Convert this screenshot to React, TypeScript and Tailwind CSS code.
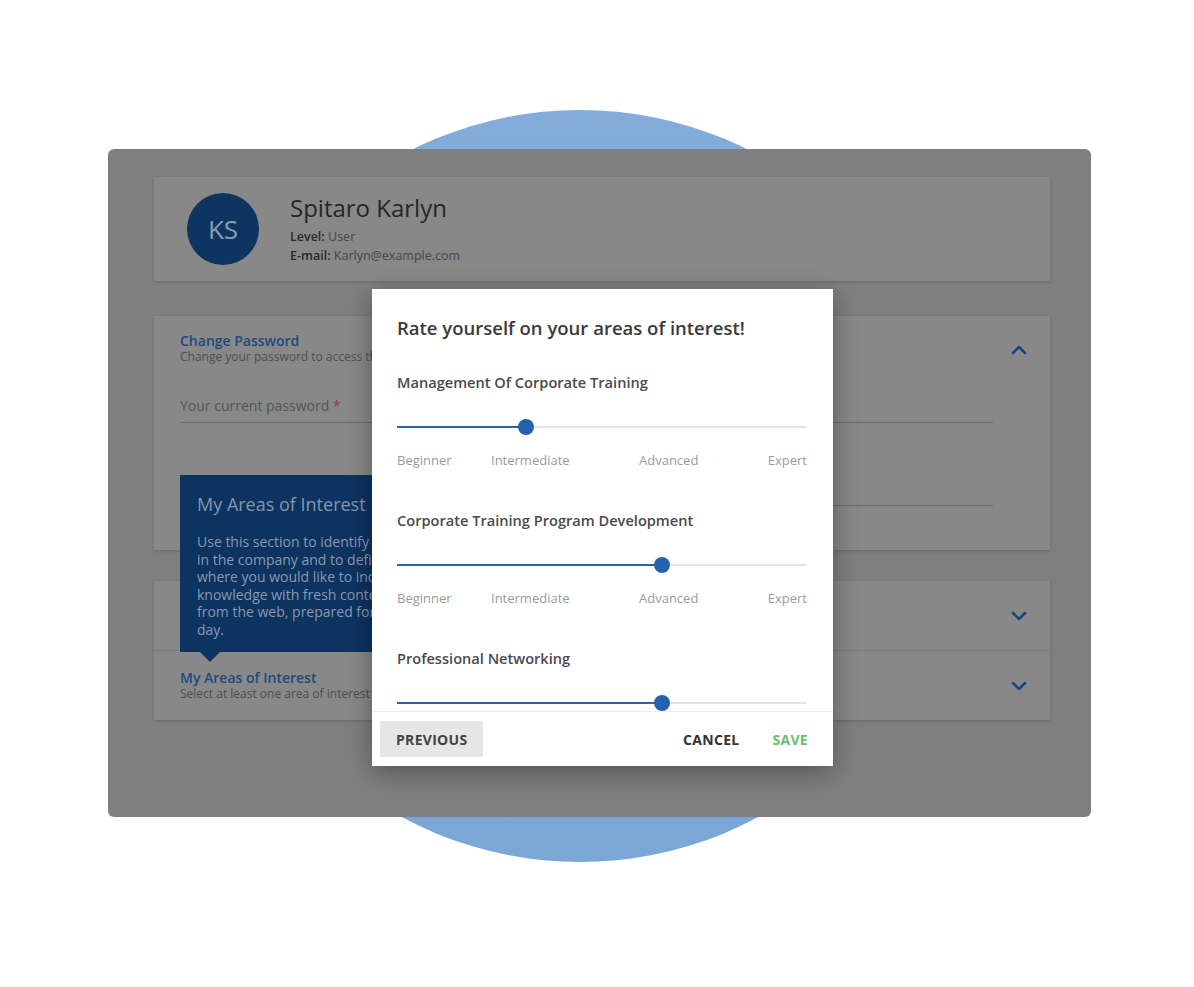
import React from 'react';
import { ChevronDown, ChevronUp } from 'lucide-react';

type Area = { name: string; value: number };

const areas: Area[] = [
  { name: 'Management Of Corporate Training', value: 129 },
  { name: 'Corporate Training Program Development', value: 265 },
  { name: 'Professional Networking', value: 265 },
];

const Slider: React.FC<{ value: number }> = ({ value }) => (
  <div className="relative h-4 w-[410px]">
    <div className="absolute left-0 right-0 top-[7px] h-[2px] bg-[#e4e4e4]" />
    <div className="absolute left-0 top-[7px] h-[2px] bg-[#2a63ad]" style={{ width: value }} />
    <div
      className="absolute top-0 h-4 w-4 -ml-2 rounded-full bg-[#2562ad]"
      style={{ left: value }}
    />
  </div>
);

const AreaRow: React.FC<{ area: Area }> = ({ area }) => (
  <div className="h-[138px] shrink-0">
    <div className="text-[14.6px] leading-5 font-semibold text-[#4a4a4a]">{area.name}</div>
    <div className="mt-[27px]">
      <Slider value={area.value} />
    </div>
    <div className="relative mt-4 h-[18px] w-[410px] text-[13px] leading-[18px] text-[#9b9b9b]">
      <span className="absolute left-0">Beginner</span>
      <span className="absolute left-[94px]">Intermediate</span>
      <span className="absolute left-[242px]">Advanced</span>
      <span className="absolute right-0">Expert</span>
    </div>
  </div>
);

const App: React.FC = () => {
  return (
    <div
      className="relative w-[1194px] h-[987px] bg-white overflow-hidden"
      style={{ fontFamily: '"Open Sans", "Noto Sans", sans-serif' }}
    >
      {/* Decorative circle behind the panel */}
      <div className="absolute left-[204px] top-[110px] w-[752px] h-[752px] rounded-full bg-gradient-to-b from-[#82acd9] to-[#7ba7d6]" />

      <div className="relative pt-[149px] pl-[108px]">
        <div className="relative w-[983px] h-[668px] rounded-[6px] bg-[#7f7f7f] pt-[28px] pl-[46px]">
          {/* Profile */}
          <div className="w-[896px] h-[104px] bg-[#888888] shadow-[0_1px_3px_rgba(0,0,0,0.18)] flex items-center pl-[33px]">
            <div className="w-[72px] h-[72px] rounded-full bg-[#0e3562] flex items-center justify-center text-[26px] text-[#8b9bb0]">
              KS
            </div>
            <div className="ml-[31px]">
              <div className="text-[24px] leading-7 text-[#262626]">Spitaro Karlyn</div>
              <div className="mt-[5px] text-[12.5px] leading-[19px] text-[#474747]">
                <span className="font-semibold text-[#2a2a2a]">Level:</span> User
              </div>
              <div className="text-[12.5px] leading-[19px] text-[#474747]">
                <span className="font-semibold text-[#2a2a2a]">E-mail:</span> Karlyn@example.com
              </div>
            </div>
          </div>

          {/* Change password */}
          <div className="mt-[35px] w-[896px] h-[234px] bg-[#888888] shadow-[0_1px_3px_rgba(0,0,0,0.18)] pt-4 pl-[26px] pr-[19px]">
            <div className="flex items-start justify-between">
              <div>
                <div className="text-[14px] leading-[18px] font-semibold text-[#1c4a7e]">Change Password</div>
                <div className="text-[12px] leading-[14px] text-[#4f4f4f]">
                  Change your password to access the platform
                </div>
              </div>
              <ChevronUp className="mt-[6px] text-[#15467c]" size={24} strokeWidth={2.5} />
            </div>
            <div className="mr-[38px] mt-[32px] border-b border-[#6c6c6c] pb-[6px] text-[14px] leading-5 text-[#555]">
              Your current password <span className="text-[#9a3b3b]">*</span>
            </div>
            <div className="mr-[38px] mt-[56px] border-b border-[#6c6c6c] pb-[6px] text-[14px] leading-5 text-[#555]">
              New password <span className="text-[#9a3b3b]">*</span>
            </div>
          </div>

          {/* Collapsed sections */}
          <div className="mt-[31px] w-[896px] bg-[#888888] shadow-[0_1px_3px_rgba(0,0,0,0.18)]">
            <div className="h-[70px] flex items-center justify-between pl-[26px] pr-[19px] border-b border-[#7a7a7a]">
              <div>
                <div className="text-[14px] leading-[18px] font-semibold text-[#1c4a7e]">My Skills</div>
                <div className="text-[12px] leading-[14px] text-[#4f4f4f]">Tell us about your skills</div>
              </div>
              <ChevronDown className="text-[#15467c]" size={24} strokeWidth={2.5} />
            </div>
            <div className="h-[69px] flex items-center justify-between pl-[26px] pr-[19px]">
              <div className="-mt-[2px]">
                <div className="text-[14px] leading-[18px] font-semibold text-[#1c4a7e]">My Areas of Interest</div>
                <div className="text-[12px] leading-[14px] text-[#4f4f4f]">
                  Select at least one area of interest
                </div>
              </div>
              <ChevronDown className="text-[#15467c]" size={24} strokeWidth={2.5} />
            </div>
          </div>

          {/* Tooltip */}
          <div className="absolute left-[72px] top-[326px] w-[400px] h-[177px] bg-[#0d3360] pt-[17px] pl-[17px]">
            <div className="text-[18px] leading-6 text-[#8496ad]">My Areas of Interest</div>
            <div className="mt-[17px] text-[14px] leading-[17.6px] text-[#8898ae] whitespace-nowrap">
              <div>Use this section to identify your skills</div>
              <div>in the company and to define the areas</div>
              <div>where you would like to increase your</div>
              <div>knowledge with fresh content selected</div>
              <div>from the web, prepared for you every</div>
              <div>day.</div>
            </div>
            <div className="absolute left-[20px] -bottom-[10px] w-0 h-0 border-l-[10px] border-r-[10px] border-t-[10px] border-l-transparent border-r-transparent border-t-[#0d3360]" />
          </div>
        </div>
      </div>

      {/* Modal */}
      <div className="absolute left-[372px] top-[289px] w-[461px] h-[477px] bg-white shadow-[0_6px_24px_rgba(0,0,0,0.35)] flex flex-col">
        <div className="pt-[27px] px-[25px]">
          <div className="text-[18.5px] leading-6 font-semibold text-[#3a3a3a]">
            Rate yourself on your areas of interest!
          </div>
        </div>
        <div className="flex-1 overflow-hidden px-[25px] pt-[32px] flex flex-col">
          {areas.map((a) => (
            <AreaRow key={a.name} area={a} />
          ))}
        </div>
        <div className="h-[55px] border-t border-[#ececec] flex items-center pl-2 pr-[25px]">
          <button className="h-9 px-4 rounded-[2px] bg-[#e6e6e6] text-[14px] font-bold tracking-[0.3px] text-[#444]">
            PREVIOUS
          </button>
          <div className="flex-1" />
          <button className="text-[14px] font-bold tracking-[0.3px] text-[#333]">CANCEL</button>
          <button className="ml-[33px] text-[14px] font-bold tracking-[0.3px] text-[#66c16a]">SAVE</button>
        </div>
      </div>
    </div>
  );
};

export default App;
